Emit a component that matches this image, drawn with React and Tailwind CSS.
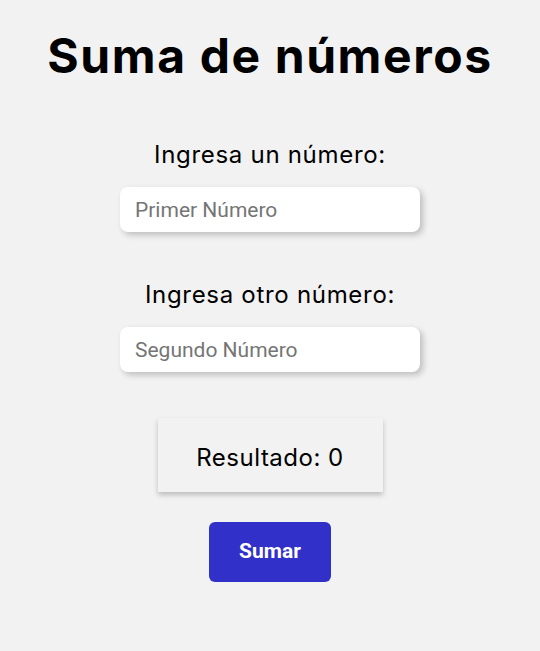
import { useState } from 'react';

export default function App() {
  const [a, setA] = useState('');
  const [b, setB] = useState('');
  const [result, setResult] = useState(0);

  const sumar = () => setResult((Number(a) || 0) + (Number(b) || 0));

  return (
    <div className="min-h-[651px] bg-[#f2f2f2] flex flex-col items-center font-['Inter',sans-serif] text-black">
      <h1 className="mt-[27px] text-[48px] leading-[58px] font-bold tracking-[1.6px]">Suma de números</h1>

      <label className="mt-[55px] text-[24px] leading-[30px] font-normal tracking-[0.7px]">Ingresa un número:</label>
      <input
        value={a}
        onChange={(e) => setA(e.target.value)}
        placeholder="Primer Número"
        className="mt-[17px] w-[300px] h-[45px] rounded-lg bg-white px-[15px] text-[21px] font-['Roboto',sans-serif] placeholder:text-[#757575] shadow-[3px_3px_6px_rgba(0,0,0,0.22)] outline-none"
      />

      <label className="mt-[48px] text-[24px] leading-[30px] font-normal tracking-[0.7px]">Ingresa otro número:</label>
      <input
        value={b}
        onChange={(e) => setB(e.target.value)}
        placeholder="Segundo Número"
        className="mt-[17px] w-[300px] h-[45px] rounded-lg bg-white px-[15px] text-[21px] font-['Roboto',sans-serif] placeholder:text-[#757575] shadow-[3px_3px_6px_rgba(0,0,0,0.22)] outline-none"
      />

      <div className="mt-[46px] w-[225px] h-[74px] pt-[5px] flex items-center justify-center bg-[#f2f2f2] shadow-[0_3px_5px_rgba(0,0,0,0.22)] text-[24px] tracking-[0.5px]">
        Resultado: {result}
      </div>

      <button
        onClick={sumar}
        className="mt-[30px] w-[122px] h-[60px] rounded-md bg-[#3130c9] text-white text-[21px] font-bold font-['Roboto',sans-serif]"
      >
        Sumar
      </button>
    </div>
  );
}
